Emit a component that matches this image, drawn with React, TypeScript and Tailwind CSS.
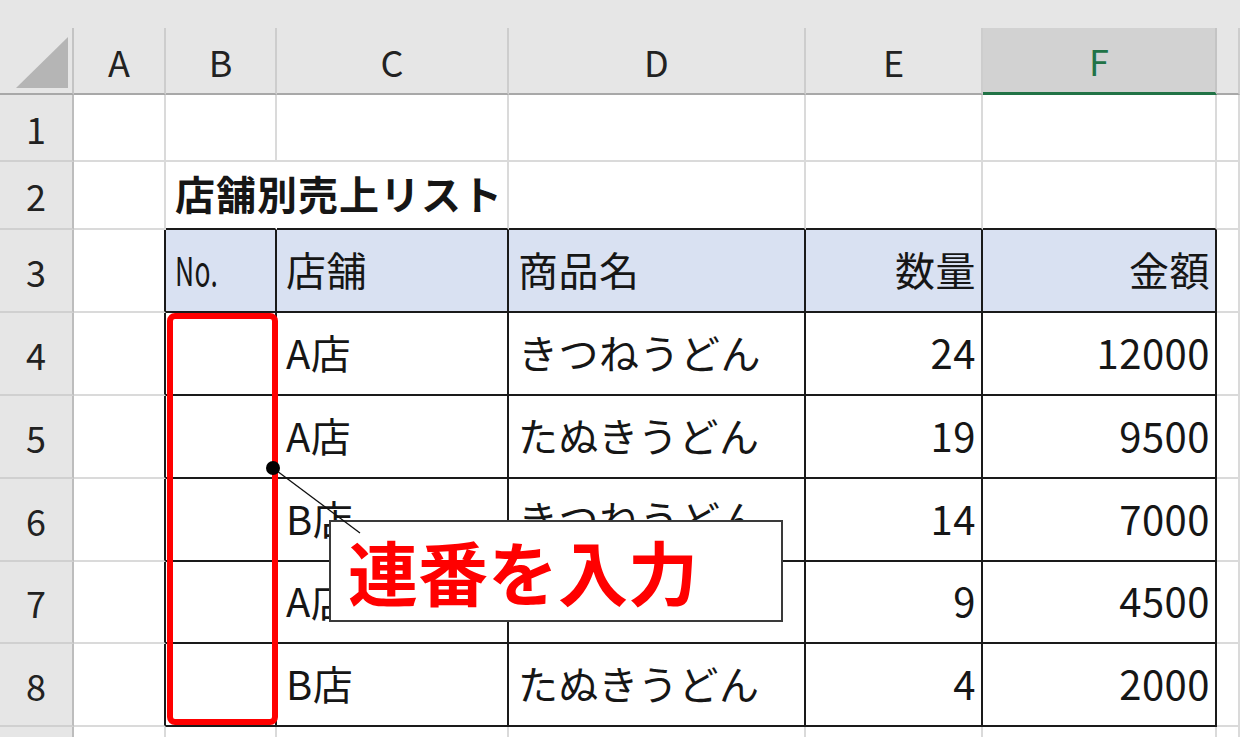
import React from "react";

const COLS = ["", "A", "B", "C", "D", "E", "F", ""];
const ROW_H = [67, 68, 83, 83, 83, 83, 82, 83, 40];

type Cell = { t: string; align?: "l" | "r"; bold?: boolean };

const data: Record<number, Cell[]> = {
  2: [{ t: "" }, { t: "店舗別売上リスト", bold: true }, { t: "" }, { t: "" }, { t: "" }, { t: "" }, { t: "" }],
  3: [{ t: "" }, { t: "No." }, { t: "店舗" }, { t: "商品名" }, { t: "数量", align: "r" }, { t: "金額", align: "r" }, { t: "" }],
  4: [{ t: "" }, { t: "" }, { t: "A店" }, { t: "きつねうどん" }, { t: "24", align: "r" }, { t: "12000", align: "r" }, { t: "" }],
  5: [{ t: "" }, { t: "" }, { t: "A店" }, { t: "たぬきうどん" }, { t: "19", align: "r" }, { t: "9500", align: "r" }, { t: "" }],
  6: [{ t: "" }, { t: "" }, { t: "B店" }, { t: "きつねうどん" }, { t: "14", align: "r" }, { t: "7000", align: "r" }, { t: "" }],
  7: [{ t: "" }, { t: "" }, { t: "A店" }, { t: "たぬきうどん" }, { t: "9", align: "r" }, { t: "4500", align: "r" }, { t: "" }],
  8: [{ t: "" }, { t: "" }, { t: "B店" }, { t: "たぬきうどん" }, { t: "4", align: "r" }, { t: "2000", align: "r" }, { t: "" }],
};

function DataCell({ r, c }: { r: number; c: number }) {
  const cell = data[r]?.[c - 1] ?? { t: "" };
  const inTableCol = c >= 2 && c <= 6;
  const rightBlack = r >= 3 && r <= 8 && c >= 1 && c <= 6;
  const bottomBlack = inTableCol && r >= 2 && r <= 8;
  const hideRight = r === 2 && c === 2;
  const headerFill = r === 3 && inTableCol;
  const rightCls = hideRight
    ? "border-r-white"
    : rightBlack
    ? "border-r-[#1a1a1a]"
    : "border-r-[#dadada]";
  const bottomCls = bottomBlack ? "border-b-[#1a1a1a]" : "border-b-[#dadada]";
  return (
    <div
      className={`relative flex items-center pb-[4px] border-r-2 border-b-2 ${rightCls} ${bottomCls} ${
        headerFill ? "bg-[#d9e1f2]" : "bg-transparent"
      } ${cell.align === "r" ? "justify-end pr-[5px]" : "justify-start pl-[9px]"}`}
    >
      {cell.t && (
        <span
          className={`whitespace-nowrap leading-none text-[#161616] text-[40px] ${
            cell.bold ? "font-bold relative z-10 tracking-[1px]" : "tracking-[0.5px]"
          } ${cell.t === "No." ? "inline-block scale-x-[0.66] origin-left tracking-[-1px]" : ""}`}
        >
          {cell.t}
        </span>
      )}
    </div>
  );
}

export default function App() {
  return (
    <div className="relative w-[1240px] h-[737px] overflow-hidden bg-white font-['Noto_Sans_CJK_JP','Noto_Sans',sans-serif]">
      <div className="h-[28px] bg-[#e6e6e6]" />
      <div className="grid grid-cols-[74px_92px_111px_232px_297px_177px_234px_1fr]">
        {/* header row */}
        <div className="relative h-[67px] bg-[#e6e6e6] border-r-2 border-r-[#c4c4c4] border-b-2 border-b-[#a8a8a8]">
          <svg className="absolute left-0 top-0" width="74" height="67">
            <polygon points="68,9 68,60 16,60" fill="#b5b5b5" />
          </svg>
        </div>
        {COLS.slice(1).map((l, i) => {
          const isF = l === "F";
          return (
            <div
              key={i}
              className={`h-[67px] flex items-center justify-center text-[36px] leading-none border-r-2 ${
                isF
                  ? "bg-[#d2d2d2] text-[#217346] border-r-[#c4c4c4] border-b-[3px] border-b-[#217346]"
                  : "bg-[#e6e6e6] text-[#222] border-r-[#cdcdcd] border-b-2 border-b-[#a8a8a8]"
              }`}
            >
              {l}
            </div>
          );
        })}
        {/* rows */}
        {ROW_H.map((h, ri) => {
          const r = ri + 1;
          return (
            <React.Fragment key={r}>
              <div
                style={{ height: h }}
                className="flex items-center justify-center bg-[#e6e6e6] text-[36px] leading-none text-[#222] border-r-2 border-r-[#bdbdbd] border-b-2 border-b-[#d0d0d0]"
              >
                {r <= 8 ? r : ""}
              </div>
              {[1, 2, 3, 4, 5, 6, 7].map((c) => (
                <DataCell key={c} r={r} c={c} />
              ))}
            </React.Fragment>
          );
        })}
      </div>

      {/* red selection outline */}
      <div className="absolute left-[167px] top-[313px] w-[111px] h-[412px] border-[6px] border-[#ff0000] rounded-[8px]" />

      {/* callout */}
      <div className="absolute left-[329px] top-[520px] w-[454px] h-[102px] bg-white border-2 border-[#3a3a3a] flex items-center pl-[17px]">
        <span className="text-[70px] leading-none font-bold text-[#ff0000] whitespace-nowrap">連番を入力</span>
      </div>

      {/* leader line */}
      <svg className="absolute left-0 top-0 pointer-events-none" width="1240" height="737">
        <line x1="273" y1="468" x2="360" y2="533" stroke="#111" strokeWidth="1.3" />
        <circle cx="273" cy="468" r="7" fill="#000" />
      </svg>
    </div>
  );
}
